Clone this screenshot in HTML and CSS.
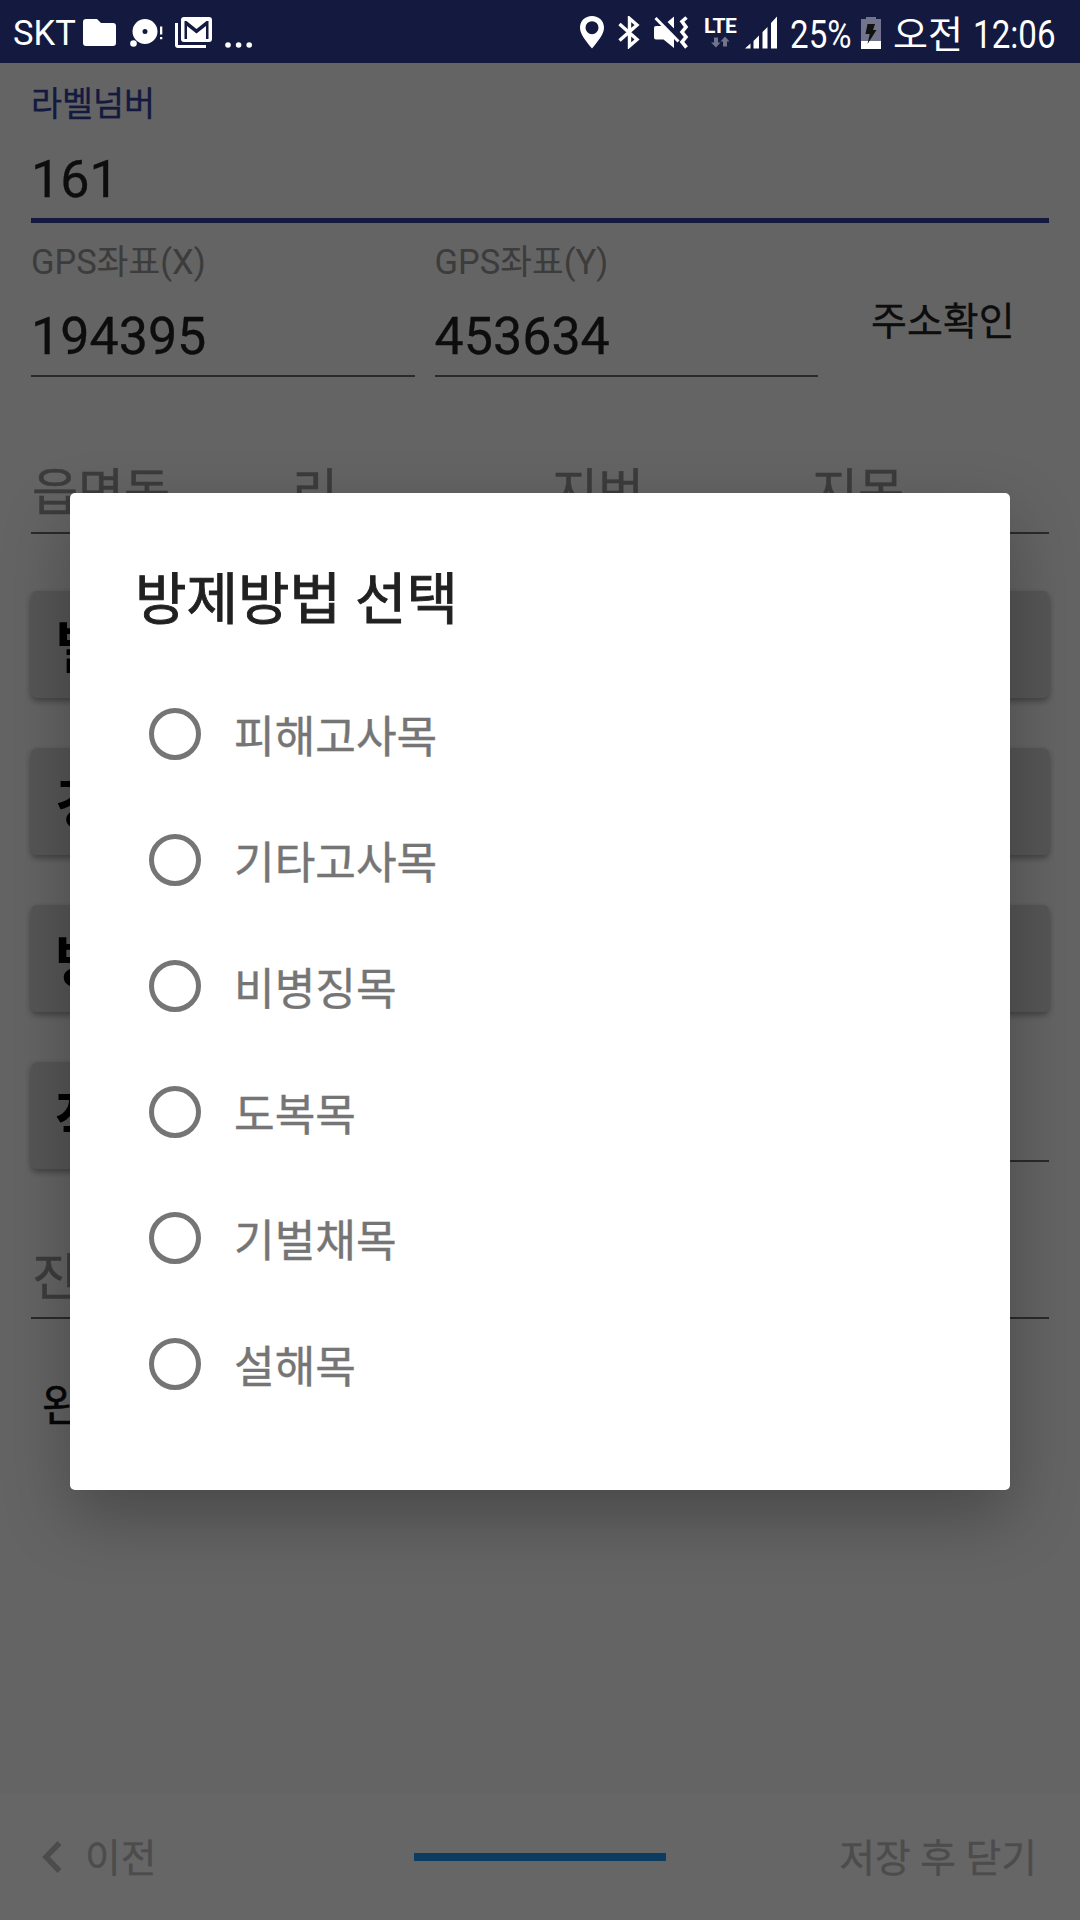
FILE: index.html
```html
<!DOCTYPE html>
<html lang="ko">
<head>
  <meta charset="UTF-8">
  <title>방제방법 선택</title>
  <meta name="viewport" content="width=device-width, initial-scale=1.0">
  <link rel="stylesheet" href="styles.css">
</head>
<body>
  <header class="status">
    <span class="carrier">SKT</span>
    <svg class="ic-folder" width="33" height="28" viewBox="0 0 33 28"><path d="M3 0h11l4 4h12q3 0 3 3v17q0 3-3 3H3q-3 0-3-3V3q0-3 3-3z"/></svg>
    <svg class="ic-disc" width="33" height="29" viewBox="0 0 33 29"><path fill-rule="evenodd" d="M15 0a12.5 12.5 0 1 1 0 25a12.5 12.5 0 1 1 0-25zM15 10a2.5 2.5 0 1 0 0 5a2.5 2.5 0 1 0 0-5z"/><circle cx="3.500" cy="24.500" r="3.300"/><path d="M30 7.500h2.300v8H30zM30 18h2.300v2.200H30z"/></svg>
    <svg class="ic-mail" width="37" height="31" viewBox="0 0 37 31"><path d="M0 6h3v22h28v3H3q-3 0-3-3z"/><path fill-rule="evenodd" d="M9 0h25q3 0 3 3v19q0 3-3 3H9q-3 0-3-3V3q0-3 3-3zM9.500 4v18H12V9l9.500 7.500L31 9v13h2.500V4h-2l-10 8-10-8z"/></svg>
    <svg class="ic-dots" width="28" height="6" viewBox="0 0 28 6"><circle cx="3" cy="3" r="2.800"/><circle cx="13.600" cy="3" r="2.800"/><circle cx="24.200" cy="3" r="2.800"/></svg>
    <svg class="ic-pin" width="24" height="33" viewBox="0 0 24 33"><path fill-rule="evenodd" d="M12 0C5 0 0 5 0 11.500C0 18 5 24 12 32.500C19 24 24 18 24 11.500C24 5 19 0 12 0zM12 5.200a6.500 6.500 0 1 1 0 13a6.500 6.500 0 1 1 0-13z"/></svg>
    <svg class="ic-bt" width="22" height="33" viewBox="0 0 22 33"><path fill="none" stroke="#fff" stroke-width="3.400" d="M1.500 8L19 23.500L11.500 30V2.500L19 9L1.500 24.500"/></svg>
    <svg class="ic-mute" width="35" height="33" viewBox="0 0 35 33"><path d="M0 12q0-2 2-2h7L20 20.500V32L9.500 23.500H2q-2 0-2-2zM13.500 6L20 0.500V12.500z"/><path fill="none" stroke="#fff" stroke-width="3" d="M1.500 2L24.500 25.500"/><path fill="none" stroke="#fff" stroke-width="3.600" d="M32.500 1.500L28 5.500L32 11L28 16L32 21L28 26L32.500 31.500"/></svg>
    <span class="lte">LTE
      <svg width="19" height="12" viewBox="0 0 19 12"><path d="M3 1.500h4v5h2.500L5 11.500 0 6.500h3zM12 10.500h4v-5h2.500L14 0.500l-4.500 5H12z"/></svg>
    </span>
    <svg class="ic-signal" width="32" height="33" viewBox="0 0 32 33"><path d="M0 32.500l5.500-5v5zM8.500 25l5.500-5.500v13H8.500zM17.500 16l5-5v21.500h-5zM26 7l6-6.500v32h-6z"/></svg>
    <span class="battery">25%</span>
    <svg class="ic-batt" width="20" height="32" viewBox="0 0 20 32"><path fill="#71748b" d="M0 2h5V0h10v2h5v23H0z"/><path d="M0 24h20v8H0z"/><path fill="#111" d="M6.500 7H14l-2 6h3.500L6.500 27l2.200-10H4.500z"/></svg>
    <span class="ampm">오전</span>
    <span class="clock">12:06</span>
  </header>

  <main class="form">
    <div class="row row-label">
      <div class="field focused"><label>라벨넘버</label><span class="value">161</span></div>
    </div>
    <div class="row row-gps">
      <div class="field"><label>GPS좌표(X)</label><span class="value">194395</span></div>
      <div class="field"><label>GPS좌표(Y)</label><span class="value">453634</span></div>
      <div class="check-address">주소확인</div>
    </div>
    <div class="row row-address">
      <div class="field"><span class="hint">읍면동</span></div>
      <div class="field"><span class="hint">리</span></div>
      <div class="field"><span class="hint">지번</span></div>
      <div class="field"><span class="hint">지목</span></div>
    </div>
    <div class="buttons">
      <div class="button">벌</div>
      <div class="button">경</div>
      <div class="button">방</div>
      <div class="split">
        <div class="button">작</div>
        <div class="field"></div>
      </div>
    </div>
    <div class="row row-note">
      <div class="field"><span class="hint">진</span></div>
    </div>
    <div class="done">완</div>
  </main>

  <footer class="steps">
    <div class="prev">
      <svg width="20" height="32" viewBox="0 0 20 32"><path fill="none" stroke="#bdbdbd" stroke-width="5.500" d="M17.500 2L4 16l13.500 14"/></svg>
      <span>이전</span>
    </div>
    <div class="bar"></div>
    <div class="save">저장 후 닫기</div>
  </footer>

  <div class="overlay">
    <section class="dialog">
      <h2>방제방법 선택</h2>
      <ul>
        <li><i class="radio"></i>피해고사목</li>
        <li><i class="radio"></i>기타고사목</li>
        <li><i class="radio"></i>비병징목</li>
        <li><i class="radio"></i>도복목</li>
        <li><i class="radio"></i>기벌채목</li>
        <li><i class="radio"></i>설해목</li>
      </ul>
    </section>
  </div>
</body>
</html>
```
FILE: styles.css
```css
* {
  box-sizing: border-box;
}
body {
  margin: 0;
  width: 1080px;
  height: 1920px;
  display: flex;
  flex-direction: column;
  overflow: hidden;
  position: relative;
  background: #fafafa;
  color: #212121;
  font-family: Roboto, "Noto Sans CJK KR", sans-serif;
}

/* status bar */
.status {
  height: 63px;
  flex: none;
  display: flex;
  align-items: flex-start;
  padding-left: 13px;
  background: #13193f;
  color: #fff;
  white-space: nowrap;
}
.status svg {
  flex: none;
  fill: #fff;
}
.carrier {
  width: 70px;
  font-size: 34.5px;
  line-height: 42px;
  margin-top: 12px;
}
.ic-folder { margin-top: 19px; }
.ic-disc { margin: 19px 0 0 14px; }
.ic-mail { margin: 17px 0 0 12px; }
.ic-dots { margin: 42px 0 0 13px; }
.ic-pin { margin: 16px 0 0 327px; }
.ic-bt { margin: 16px 0 0 14px; }
.ic-mute { margin: 16px 0 0 14px; }
.lte {
  width: 34px;
  margin: 16px 0 0 15px;
  font-size: 21px;
  font-weight: 700;
  line-height: 20px;
  letter-spacing: -.5px;
}
.lte svg {
  display: block;
  margin-left: 7px;
}
.status .lte svg { fill: #71748b; }
.ic-signal { margin: 16px 0 0 7px; }
.battery, .clock {
  font-size: 39px;
  line-height: 46px;
  margin-top: 12px;
  transform: scaleX(.85);
  transform-origin: left;
}
.battery {
  width: 71px;
  margin-left: 13px;
}
.ic-batt { margin-top: 17px; }
.ampm {
  width: 80px;
  font-size: 38px;
  line-height: 46px;
  margin: 12px 0 0 12px;
}

/* form */
.form {
  flex: 1;
  padding: 0 31px;
}
.row {
  display: flex;
  gap: 20px;
}
.row-label { height: 160px; }
.row-gps { height: 154px; }
.row-address {
  height: 157px;
  gap: 22px;
}
.row-note { height: 150px; }
.field {
  flex: 1;
  display: flex;
  flex-direction: column;
  justify-content: flex-end;
  border-bottom: 2px solid #6a6a6a;
}
.field label {
  font-size: 34.5px;
  line-height: 40px;
  color: #969696;
}
.value {
  margin: 24px 0 7px;
  font-size: 52px;
  line-height: 62px;
  -webkit-text-stroke: .3px;
}
.hint {
  margin: 0 0 8px 1px;
  font-size: 50px;
  line-height: 62px;
  color: #969696;
  -webkit-text-stroke: .5px;
}
.focused {
  border-bottom: 5px solid #303f9f;
}
.field.focused label {
  font-size: 33.7px;
  color: #303f9f;
  -webkit-text-stroke: .3px;
}
.row-gps .field { flex: 0 0 383.5px; }
.check-address {
  flex: 1;
  padding: 76px 0 0 33px;
  font-size: 39px;
  line-height: 46px;
  white-space: nowrap;
  -webkit-text-stroke: .3px;
}
.buttons {
  margin-top: 57px;
  display: grid;
  gap: 50px;
}
.button {
  height: 107px;
  padding: 4px 0 0 24px;
  border-radius: 6px;
  background: #d6d7d7;
  box-shadow: 0 3px 6px rgba(0, 0, 0, .35);
  color: #000;
  font-size: 57px;
  font-weight: 700;
  line-height: 107px;
}
.split {
  display: flex;
  gap: 20px;
}
.split .button { width: 500px; }
.split .field { margin-bottom: 7px; }
.done {
  margin-top: 60px;
  padding-left: 11px;
  font-size: 44px;
  line-height: 54px;
  color: #111;
  -webkit-text-stroke: .6px;
}

/* footer */
.steps {
  height: 127px;
  flex: none;
  display: grid;
  grid-template-columns: 414px 252px 1fr;
  align-items: center;
  padding-right: 43px;
  background: #fff;
  color: #bdbdbd;
  font-size: 38.8px;
  line-height: 46px;
}
.prev {
  display: flex;
  align-items: center;
  gap: 23px;
  padding-left: 42px;
}
.prev span, .save {
  padding-top: 5px;
  -webkit-text-stroke: .3px;
}
.bar {
  height: 8px;
  background: #2196f3;
}
.save { text-align: right; }

/* dialog */
.overlay {
  position: absolute;
  inset: 63px 0 0;
  padding: 430px 70px 0;
  background: rgba(0, 0, 0, .6);
}
.dialog {
  height: 997px;
  border-radius: 5px;
  background: #fff;
  box-shadow: 0 26px 66px rgba(0, 0, 0, .28);
}
.dialog h2 {
  margin: 0;
  padding: 73px 0 0 65px;
  font-size: 56px;
  font-weight: 400;
  line-height: 68px;
  -webkit-text-stroke: .9px;
}
.dialog ul {
  margin: 37px 0 0;
  padding: 0 0 0 79px;
  list-style: none;
}
.dialog li {
  height: 126px;
  display: flex;
  align-items: center;
  gap: 33px;
  color: #757575;
  font-size: 44.2px;
  -webkit-text-stroke: .4px;
}
.radio {
  width: 52px;
  height: 52px;
  border: 5px solid #757575;
  border-radius: 50%;
}
```
